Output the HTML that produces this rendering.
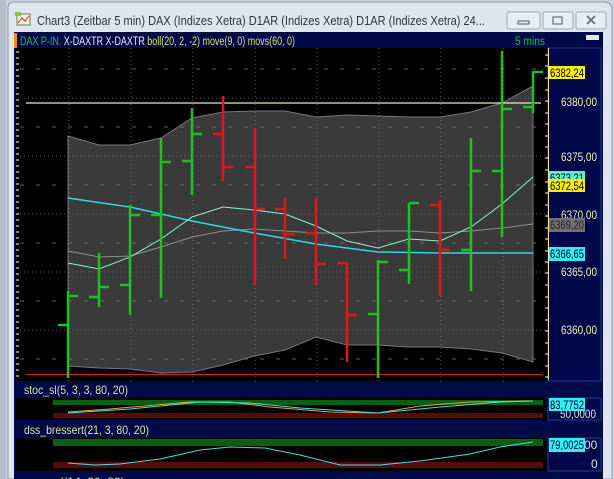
<!DOCTYPE html>
<html><head><meta charset="utf-8"><style>
html,body{margin:0;padding:0;background:#c9d3de;}
svg{display:block;font-family:"Liberation Sans",sans-serif;}
</style></head><body>
<svg width="614" height="479" viewBox="0 0 614 479" xmlns="http://www.w3.org/2000/svg">
<rect width="614" height="479" fill="#c8d2dc"/>
<rect x="0" y="0" width="6" height="479" fill="#b4bec8"/>
<path d="M8 479 V8 Q8 2 14 2 H604 Q612 2 612 10 V479 Z" fill="#dde6ef" stroke="#8e9aa6"/>
<rect x="17" y="14" width="13" height="11" fill="#f4f0e0" stroke="#6a7a50"/>
<path d="M18 23 L22 18 L25 21 L29 16" stroke="#d02020" fill="none"/>
<rect x="15" y="12" width="6" height="4" fill="#8fbf40"/>
<text x="37" y="25" font-size="12.5" fill="#30343a" textLength="448" lengthAdjust="spacingAndGlyphs">Chart3 (Zeitbar 5 min)  DAX (Indizes Xetra) D1AR (Indizes Xetra) D1AR (Indizes Xetra) 24...</text>
<g fill="#e6edf4" stroke="#9aa6b2">
<rect x="507" y="12" width="33" height="17" rx="2"/>
<rect x="543" y="12" width="30" height="17" rx="2"/>
<rect x="576" y="12" width="30" height="17" rx="2"/>
</g>
<rect x="518" y="21" width="11" height="3" fill="none" stroke="#555"/>
<rect x="553" y="17" width="9" height="7" fill="none" stroke="#555"/>
<path d="M587 16 L595 24 M595 16 L587 24" stroke="#666" stroke-width="1.6"/>
<rect x="14" y="32" width="589" height="447" fill="#000a46"/>
<rect x="14" y="33" width="3" height="15" fill="#f08a10"/>
<text x="20" y="45" font-size="11.5" textLength="275" lengthAdjust="spacingAndGlyphs"><tspan fill="#20c040">DAX P-IN. </tspan><tspan fill="#e8f0ff">X-DAXTR X-DAXTR </tspan><tspan fill="#e0e060">boll(20, 2, -2) move(9, 0) movs(60, 0)</tspan></text>
<text x="515" y="45" font-size="11.5" fill="#20c040" textLength="30" lengthAdjust="spacingAndGlyphs">5 mins</text>
<rect x="586" y="35" width="13" height="5" fill="#e8e8e8"/>
<rect x="16" y="48" width="532" height="333" fill="#000"/>
<rect x="548" y="48" width="53" height="333" fill="#00084a" stroke="#2a3a90"/>
<line x1="548.5" y1="48" x2="548.5" y2="380" stroke="#f0e8a0"/>
<g stroke="#fff" stroke-width="1">
<path d="M16 52h3M16 58h3M16 64h3M16 70h3M16 76h3M16 82h3M16 88h3M16 94h3M16 100h3M16 106h3M16 112h3M16 118h3M16 124h3M16 130h3M16 136h3M16 142h3M16 148h3M16 154h3M16 160h3M16 166h3M16 172h3M16 178h3M16 184h3M16 190h3M16 196h3M16 202h3M16 208h3M16 214h3M16 220h3M16 226h3M16 232h3M16 238h3M16 244h3M16 250h3M16 256h3M16 262h3M16 268h3M16 274h3M16 280h3M16 286h3M16 292h3M16 298h3M16 304h3M16 310h3M16 316h3M16 322h3M16 328h3M16 334h3M16 340h3M16 346h3M16 352h3M16 358h3M16 364h3M16 370h3M16 376h3"/>
<path d="M545 55h3M545 66h3M545 78h3M545 90h3M545 101h4M545 113h3M545 124h3M545 136h3M545 147h3M545 158h4M545 170h3M545 182h3M545 193h3M545 205h3M545 216h4M545 228h3M545 239h3M545 251h3M545 262h3M545 273h4M545 285h3M545 297h3M545 308h3M545 320h3M545 331h4M545 343h3M545 354h3M545 366h3M545 377h3"/>
</g>
<path d="M68 136 L99 145 L130 145 L161 138 L192 118 L223 112 L254 111 L285 111 L316 117 L347 115 L378 116 L409 117 L440 117 L471 112 L502 103 L533 86 L533 362 L502 353 L471 349 L440 347 L409 347 L378 345 L347 345 L316 337 L285 350 L254 356 L223 365 L192 372 L161 373 L130 369 L99 368 L68 366 Z" fill="#3a3a3a" stroke="#777" stroke-width="1"/>
<g stroke="#777" stroke-width="1" stroke-dasharray="1,3" opacity="0.8">
<path d="M69 48V381M131 48V381M193 48V381M255 48V381M317 48V381M379 48V381M441 48V381M503 48V381"/>
</g>
<g stroke="#777" stroke-width="1" stroke-dasharray="4,12" opacity="0.8">
<path d="M20 69H545M20 127H545M20 185H545M20 243H545M20 301H545M20 359H545"/>
</g>
<g stroke="#777" stroke-width="1" stroke-dasharray="1,3" opacity="0.7">
<path d="M20 98H545M20 156H545M20 214H545M20 272H545M20 330H545"/>
</g>
<line x1="26" y1="103" x2="541" y2="103" stroke="#e8f0b0" stroke-width="1.2"/>
<line x1="26" y1="374.5" x2="543" y2="374.5" stroke="#d02020" stroke-width="1.2"/>
<polyline points="68,251 99,257 130,256 161,247 192,237 223,231 254,229 285,231 316,233 347,233 378,231 409,231 440,233 471,231 502,228 533,224" fill="none" stroke="#909090" stroke-width="1"/>
<polyline points="68,198 130,207 192,221 254,233 316,244 378,252 440,253 533,253" fill="none" stroke="#30d8e0" stroke-width="1.5"/>
<polyline points="68,263 99,269 130,257 161,239 192,217 223,207 254,210 285,214 316,226 347,241 378,248 409,239 440,241 471,227 502,204 533,177" fill="none" stroke="#90f0d0" stroke-width="1"/>
<g stroke-width="2.5" fill="none">
<g stroke="#20c020">
<path d="M68 291V378M58 325H68M68 296H78"/>
<path d="M99 253V307M89 297H99M99 287H109"/>
<path d="M130 205V315M120 285H130M130 215H140"/>
<path d="M161 138V298M151 215H161M161 162H171"/>
<path d="M192 108V195M182 161H192M192 134H202"/>
<path d="M378 260V378M368 314H378M378 262H388"/>
<path d="M409 203V284M399 270H409M409 203H419"/>
<path d="M471 138V291M461 250H471M471 171H481"/>
<path d="M502 51V237M492 171H502M502 109H512"/>
<path d="M533 71V113M523 107H533M533 72H543"/>
</g>
<g stroke="#e01818">
<path d="M223 96V181M213 134H223M223 167H233"/>
<path d="M255 128V285M245 167H255M255 209H265"/>
<path d="M285 198V259M275 209H285M285 234H295"/>
<path d="M316 198V285M306 233H316M316 264H326"/>
<path d="M347 263V362M337 263H347M347 315H357"/>
<path d="M440 200V296M430 205H440M440 250H450"/>
</g>
</g>
<g font-size="12" fill="#f0f0b0">
<text x="561" y="106" textLength="36" lengthAdjust="spacingAndGlyphs">6380,00</text>
<text x="561" y="161" textLength="36" lengthAdjust="spacingAndGlyphs">6375,00</text>
<text x="561" y="219" textLength="36" lengthAdjust="spacingAndGlyphs">6370,00</text>
<text x="561" y="276" textLength="36" lengthAdjust="spacingAndGlyphs">6365,00</text>
<text x="561" y="334" textLength="36" lengthAdjust="spacingAndGlyphs">6360,00</text>
</g>
<g font-size="12">
<rect x="549" y="171" width="36" height="13" fill="#60f0c0"/><text x="550" y="182" fill="#003" textLength="34" lengthAdjust="spacingAndGlyphs">6373,21</text>
<rect x="549" y="179" width="36" height="13" fill="#f8f000"/><text x="550" y="190" fill="#000" textLength="34" lengthAdjust="spacingAndGlyphs">6372,54</text>
<rect x="549" y="66" width="36" height="13" fill="#f8f000"/><text x="550" y="77" fill="#000" textLength="34" lengthAdjust="spacingAndGlyphs">6382,24</text>
<rect x="549" y="218" width="36" height="14" fill="#707070"/><text x="550" y="229" fill="#222" textLength="34" lengthAdjust="spacingAndGlyphs">6369,20</text>
<rect x="549" y="247" width="36" height="14" fill="#30f0f0"/><text x="550" y="258" fill="#003" textLength="34" lengthAdjust="spacingAndGlyphs">6366,65</text>
</g>
<text x="24" y="394" font-size="12" fill="#e0e0a0" textLength="104" lengthAdjust="spacingAndGlyphs">stoc_sl(5, 3, 3, 80, 20)</text>
<rect x="16" y="398" width="532" height="22" fill="#000"/>
<rect x="53" y="400" width="490" height="5" fill="#0a6010"/>
<rect x="53" y="413" width="490" height="5" fill="#5a0a0a"/>
<polyline points="68,412 110,409 190,402 230,402 270,407 330,412 378,413 420,406 470,402 533,401" fill="none" stroke="#f0a030" stroke-width="1"/>
<polyline points="68,413 130,409 200,402 250,403 300,408 378,413 440,407 500,402 533,401" fill="none" stroke="#40e0e0" stroke-width="1"/>
<rect x="548" y="398" width="53" height="22" fill="#00084a" stroke="#2a3a90"/>
<text x="560" y="418" font-size="12" fill="#e0e0e0" textLength="36" lengthAdjust="spacingAndGlyphs">50,0000</text>
<rect x="549" y="398" width="36" height="13" fill="#30f0f0"/>
<text x="550" y="409" font-size="12" fill="#003" textLength="34" lengthAdjust="spacingAndGlyphs">83,7752</text>
<text x="24" y="434" font-size="12" fill="#e0e0a0" textLength="125" lengthAdjust="spacingAndGlyphs">dss_bressert(21, 3, 80, 20)</text>
<rect x="16" y="438" width="532" height="33" fill="#000"/>
<rect x="53" y="439" width="490" height="7" fill="#0a6010"/>
<rect x="53" y="462" width="490" height="6" fill="#5a0a0a"/>
<polyline points="68,463 95,465 120,464 160,459 200,450 230,447 265,448 300,455 340,465 380,465 420,461 470,454 500,447 533,442" fill="none" stroke="#40e0e0" stroke-width="1"/>
<rect x="548" y="438" width="53" height="33" fill="#00084a" stroke="#2a3a90"/>
<text x="584" y="449" font-size="12" fill="#e0e0e0">00</text>
<rect x="549" y="438" width="36" height="14" fill="#30f0f0"/>
<text x="550" y="449" font-size="12" fill="#003" textLength="34" lengthAdjust="spacingAndGlyphs">79,0025</text>
<text x="591" y="468" font-size="12" fill="#e0e0e0">0</text>
<text x="24" y="486" font-size="12" fill="#e0e0a0">parp_sl(14, 20, 80)</text>
</svg>
</body></html>
